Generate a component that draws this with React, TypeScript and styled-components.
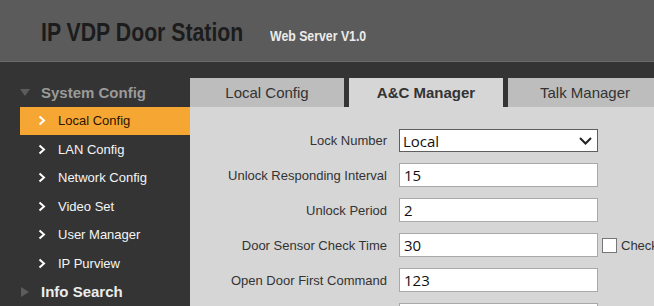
import { createGlobalStyle } from "styled-components";
import styled from "styled-components";

const GlobalStyle = createGlobalStyle`
  html, body {
    margin: 0;
    padding: 0;
    width: 654px;
    height: 306px;
    overflow: hidden;
    background: #343434;
    font-family: "Liberation Sans", Arial, sans-serif;
  }
  * { box-sizing: border-box; }
`;

const Page = styled.div`
  width: 654px;
  height: 306px;
  overflow: hidden;
  display: flex;
  flex-direction: column;
`;

const Header = styled.header`
  height: 62px;
  flex: none;
  background: #5b5b5b;
  border-bottom: 1px solid #6b6b6b;
  display: flex;
  align-items: baseline;
  padding: 20px 0 0 41px;
`;

// the logo font is a condensed Arial; squeeze the regular one
const Title = styled.h1`
  margin: 0 -35px 0 0;
  font-size: 25px;
  line-height: 1;
  font-weight: 700;
  color: #1c1c1c;
  transform: scaleX(0.85);
  transform-origin: left center;
`;

const SubTitle = styled.span`
  margin-left: 26px;
  font-size: 15px;
  font-weight: 700;
  color: #ececec;
  transform: scaleX(0.82);
  transform-origin: left center;
`;

const Body = styled.div`
  flex: 1;
  display: grid;
  grid-template-columns: 190px 1fr;
  min-height: 0;
`;

const Sidebar = styled.nav`
  padding-top: 16px;
  background: #343434;
`;

const Group = styled.div<{ $open?: boolean }>`
  height: 28.5px;
  display: flex;
  align-items: center;
  padding-left: 20px;
  gap: 11px;
  font-size: 15px;
  font-weight: 700;
  color: ${(p) => (p.$open ? "#9a9a9a" : "#ececec")};
`;

const Item = styled.div<{ $active?: boolean }>`
  height: 28.5px;
  margin-left: 20px;
  display: flex;
  align-items: center;
  padding-left: 18px;
  gap: 12px;
  font-size: 13px;
  color: ${(p) => (p.$active ? "#2a1500" : "#f4f4f4")};
  background: ${(p) => (p.$active ? "#f6a733" : "transparent")};
`;

const Main = styled.main`
  padding-top: 16px;
  display: flex;
  flex-direction: column;
  min-width: 0;
`;

const Tabs = styled.div`
  display: flex;
  gap: 5px;
  height: 29px;
  flex: none;
`;

const Tab = styled.div<{ $active?: boolean }>`
  width: 154px;
  flex: none;
  display: flex;
  align-items: center;
  justify-content: center;
  padding-bottom: 1px;
  font-size: 15px;
  color: #333;
  font-weight: ${(p) => (p.$active ? 700 : 400)};
  background: ${(p) => (p.$active ? "#d6d6d6" : "#bdbdbd")};
`;

const Panel = styled.div`
  flex: 1;
  background: #d6d6d6;
  padding-top: 22px;
  display: grid;
  grid-template-columns: 197px 199px auto;
  column-gap: 12px;
  row-gap: 11px;
  align-content: start;
  align-items: center;
`;

const Label = styled.label`
  text-align: right;
  font-size: 13px;
  color: #333;
  white-space: nowrap;
`;

const Field = styled.input`
  width: 199px;
  height: 24px;
  border: 1px solid #a9a9a9;
  background: #fff;
  padding: 0 0 0 4px;
  font-family: "Open Sans", "DejaVu Sans", sans-serif;
  font-size: 15px;
  color: #111;
  outline: none;
`;

const SelectBox = styled.div`
  position: relative;
  width: 199px;
  height: 23px;
  border: 1px solid #5e5e5e;
  background: #fff;
  padding-left: 3px;
  display: flex;
  align-items: center;
  font-family: "Open Sans", "DejaVu Sans", sans-serif;
  font-size: 15px;
  color: #111;
`;

const SelectArrow = styled.svg`
  position: absolute;
  right: 5px;
  top: 7px;
`;

const Extra = styled.div`
  display: flex;
  align-items: center;
  gap: 4px;
  margin-left: -8px;
  font-size: 13px;
  color: #333;
  white-space: nowrap;
`;

const Box = styled.span`
  width: 15px;
  height: 15px;
  border: 1px solid #777;
  background: #fff;
`;

const Chevron = () => (
  <svg width="8" height="11" viewBox="0 0 8 11">
    <polyline points="1.5,1.5 6,5.5 1.5,9.5" fill="none" stroke="#fff" strokeWidth="2" />
  </svg>
);

const Triangle = ({ down }: { down?: boolean }) => (
  <svg width="10" height="10" viewBox="0 0 10 10">
    {down ? (
      <polygon points="0,2 10,2 5,9" fill="#5c5c5c" />
    ) : (
      <polygon points="1,0 9,5 1,10" fill="#5c5c5c" />
    )}
  </svg>
);

const menu = [
  "Local Config",
  "LAN Config",
  "Network Config",
  "Video Set",
  "User Manager",
  "IP Purview",
];

const rows = [
  { label: "Unlock Responding Interval", value: "15" },
  { label: "Unlock Period", value: "2" },
  { label: "Door Sensor Check Time", value: "30", check: true },
  { label: "Open Door First Command", value: "123" },
];

function App() {
  return (
    <Page>
      <GlobalStyle />
      <Header>
        <Title>IP VDP Door Station</Title>
        <SubTitle>Web Server V1.0</SubTitle>
      </Header>
      <Body>
        <Sidebar>
          <Group $open>
            <Triangle down />
            System Config
          </Group>
          {menu.map((m, i) => (
            <Item key={m} $active={i === 0}>
              <Chevron />
              {m}
            </Item>
          ))}
          <Group>
            <Triangle />
            Info Search
          </Group>
        </Sidebar>
        <Main>
          <Tabs>
            <Tab>Local Config</Tab>
            <Tab $active>A&amp;C Manager</Tab>
            <Tab>Talk Manager</Tab>
          </Tabs>
          <Panel>
            <Label>Lock Number</Label>
            <SelectBox>
              Local
              <SelectArrow width="13" height="8" viewBox="0 0 13 8">
                <polyline points="1,1 6.5,6.5 12,1" fill="none" stroke="#222" strokeWidth="2" />
              </SelectArrow>
            </SelectBox>
            <span />
            {rows.map((r) => (
              <>
                <Label key={r.label}>{r.label}</Label>
                <Field defaultValue={r.value} />
                {r.check ? (
                  <Extra>
                    <Box />
                    Check
                  </Extra>
                ) : (
                  <span />
                )}
              </>
            ))}
            <span />
            <Field defaultValue="" />
            <span />
          </Panel>
        </Main>
      </Body>
    </Page>
  );
}

export default App;
